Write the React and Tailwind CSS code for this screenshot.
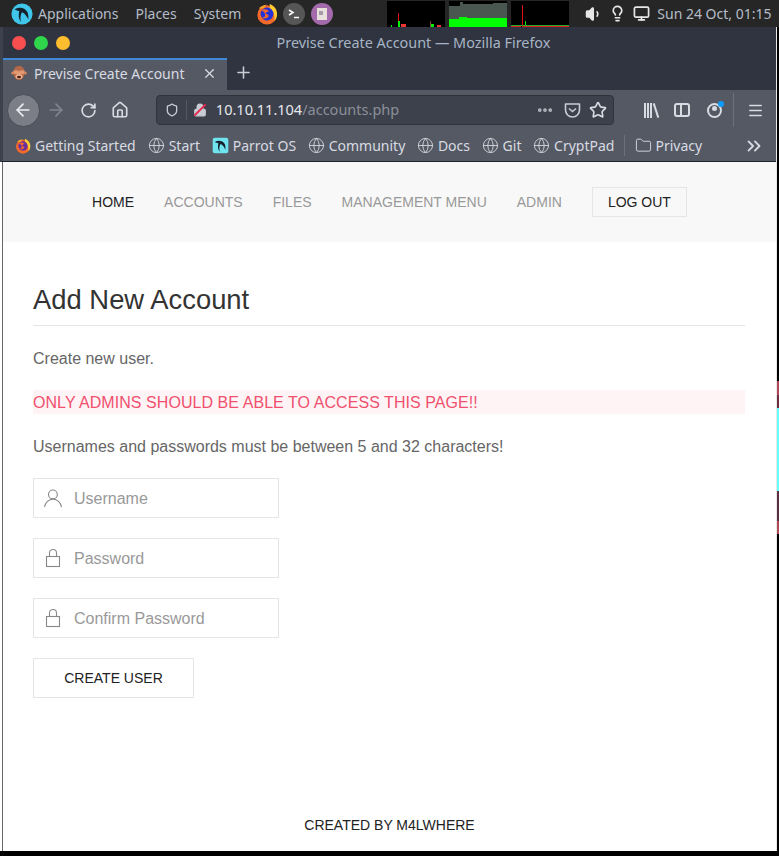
import { ArrowLeft, ArrowRight, RotateCw, House, Shield, Star, X, Plus, Ellipsis, Menu, Volume1, Lightbulb, Monitor, ChevronsRight, Folder, Globe, Lock } from 'lucide-react';

const BOOKMARKS = [
  { label: 'Start', icon: 'globe' },
  { label: 'Parrot OS', icon: 'parrot' },
  { label: 'Community', icon: 'globe' },
  { label: 'Docs', icon: 'globe' },
  { label: 'Git', icon: 'globe' },
  { label: 'CryptPad', icon: 'globe' },
];

const NAV = ['ACCOUNTS', 'FILES', 'MANAGEMENT MENU', 'ADMIN'];

function UserIcon() {
  return (
    <svg width="20" height="20" viewBox="0 0 20 20" fill="none" stroke="#888" strokeWidth="1.1">
      <circle cx="9.9" cy="6.4" r="4.4" />
      <path d="M1.5 19c.8-4.5 4.3-7.8 8.5-7.8s7.7 3.4 8.5 8" />
    </svg>
  );
}

function LockIcon() {
  return (
    <svg width="20" height="20" viewBox="0 0 20 20" fill="none" stroke="#888" strokeWidth="1.1">
      <rect x="3.5" y="8.5" width="13" height="10" />
      <path d="M6.5 8V4.9C6.5 3 8.1 1.5 10 1.5s3.5 1.5 3.5 3.4V8" />
    </svg>
  );
}

const FIELDS = [
  { placeholder: 'Username', Icon: UserIcon },
  { placeholder: 'Password', Icon: LockIcon },
  { placeholder: 'Confirm Password', Icon: LockIcon },
];

function FirefoxLogo({ size = 18, inner = '#2430d8' }) {
  return (
    <svg width={size} height={size} viewBox="0 0 24 24">
      <circle cx="12" cy="13" r="10.5" fill="#f2692a" />
      <path d="M15 1c5 2 8 6 8 11 0 3-1 6-3 8 1-6-1-11-5-14z" fill="#ffcb33" />
      <path d="M3 6c2-2 5-4 9-4-2 1-3 3-3 4z" fill="#f8a02c" />
      <circle cx="12" cy="12" r="7" fill={inner} />
      <path d="M6 8c3-2 7-1 8 1l-4 2 4 3c-1 3-5 4-8 2 3 0 4-1 4-3 0-2-2-4-4-5z" fill="#f2692a" />
    </svg>
  );
}

function ParrotLogo({ size = 22, square = false }) {
  return (
    <svg width={size} height={size} viewBox="0 0 24 24">
      {square ? <rect x="1" y="1" width="22" height="22" rx="3" fill="#6fe3ee" /> : <circle cx="12" cy="12" r="11.5" fill="#3fc6ea" />}
      <path d="M4 7c5-3 11-2 14 3 1 2 1 6 1 8-2-4-4-7-7-8-2 3-2 7-1 11-3-4-3-8-2-12-2-1-3-1-5-2z" fill="#15222e" />
    </svg>
  );
}

// tab favicon, the see-no-evil monkey
function MonkeyIcon() {
  return (
    <svg width="16" height="16" viewBox="0 0 16 16" className="shrink-0">
      <circle cx="1.8" cy="8" r="1.6" fill="#d9875f" />
      <circle cx="14.2" cy="8" r="1.6" fill="#d9875f" />
      <path d="M8 1c3.5 0 5.5 2.5 5.5 6.5S11.5 15 8 15s-5.500-3.500-5.500-7.500S4.500 1 8 1z" fill="#b5694a" />
      <path d="M2.500 5.500h4.800l.7 1.500.7-1.500h4.800v2c0 1-1 1.500-2 1.500H4.500c-1 0-2-.5-2-1.500z" fill="#e39a72" />
      <ellipse cx="8" cy="11.500" rx="3.500" ry="2.500" fill="#eeb48f" />
      <ellipse cx="8" cy="12" rx="2" ry="1.200" fill="#4a2016" />
    </svg>
  );
}

function PocketIcon() {
  return (
    <svg width="17" height="15" viewBox="0 0 17 15" fill="none" stroke="#c8ccd4" strokeWidth="1.6" className="shrink-0">
      <path d="M1.500 1h14v6a7 7 0 0 1-14 0z" strokeLinejoin="round" />
      <path d="M5 5.500l3.500 3 3.500-3" />
    </svg>
  );
}

function TerminalIcon() {
  return (
    <svg width="22" height="22" viewBox="0 0 22 22" fill="none" stroke="#fff" strokeWidth="1.5">
      <circle cx="11" cy="11" r="11" fill="#565656" stroke="none" />
      <path d="M6 7l4 2.500-4 2.500" />
      <path d="M11 14.500h5" />
    </svg>
  );
}

function NotesIcon() {
  return (
    <svg width="22" height="22" viewBox="0 0 22 22">
      <circle cx="11" cy="11" r="11" fill="#a36bab" />
      <path d="M6 5h10v12H6z" fill="#e8e0dc" />
      <path d="M8 8h4v4H8z" fill="#a99aa8" />
    </svg>
  );
}

// system monitor graphs in the panel
function Graph({ kind }) {
  return (
    <svg width="58" height="26" viewBox="0 0 58 26" className="block bg-black">
      {kind === 'a' && (
        <g>
          <rect x="11" y="12" width="1" height="14" fill="#d11" />
          <rect x="11" y="20" width="2" height="6" fill="#0e0" />
          <rect x="14" y="23" width="5" height="3" fill="#e33" />
          <rect x="4" y="24" width="1" height="2" fill="#0e0" />
          <rect x="43" y="20" width="1" height="6" fill="#844" />
          <rect x="44" y="23" width="3" height="3" fill="#0e0" />
          <rect x="50" y="24" width="4" height="2" fill="#e33" />
        </g>
      )}
      {kind === 'b' && (
        <g>
          <path d="M0 5h11V1h3v2h30V2h14v24H0z" fill="#4a5750" />
          <path d="M0 18h10v-2h8v1h40v9H0z" fill="#0f0" />
        </g>
      )}
      {kind === 'c' && (
        <g>
          <rect x="11" y="4" width="1" height="22" fill="#d11" />
          <rect x="14" y="20" width="1" height="6" fill="#0e0" />
          <rect x="0" y="24" width="58" height="1" fill="#2a2" />
          <rect x="12" y="25" width="46" height="1" fill="#d22" />
          <rect x="0" y="25" width="10" height="1" fill="#d22" />
        </g>
      )}
    </svg>
  );
}

function Bookmark({ item }) {
  return (
    <div className="flex items-center gap-[4px]">
      {item.icon === 'globe' ? <Globe size={17} strokeWidth={1.3} className="text-[#d4d6dc]" /> : <ParrotLogo size={17} square />}
      <span>{item.label}</span>
    </div>
  );
}

function TopPanel() {
  return (
    <div className="flex h-[27px] items-center bg-[#262626] pl-[11px] pr-[4px] text-[14px] text-[#b4bcc8]">
      <ParrotLogo />
      <span className="ml-[5px]">Applications</span>
      <span className="ml-[17px]">Places</span>
      <span className="ml-[17px]">System</span>
      <div className="ml-[15px]"><FirefoxLogo size={22} /></div>
      <div className="ml-[5px]"><TerminalIcon /></div>
      <div className="ml-[6px]"><NotesIcon /></div>
      <div className="ml-[54px] flex gap-[4px]">
        <Graph kind="a" />
        <Graph kind="b" />
        <Graph kind="c" />
      </div>
      <Volume1 size={18} className="ml-[16px] text-[#e6e6e6]" fill="#e6e6e6" />
      <Lightbulb size={17} className="ml-[6px] text-[#e6e6e6]" strokeWidth={2.4} />
      <Monitor size={17} className="ml-[7px] text-[#e6e6e6]" strokeWidth={2.4} />
      <span className="ml-[7px] whitespace-nowrap">Sun 24 Oct, 01:15</span>
    </div>
  );
}

function Browser() {
  return (
    <div className="border-b border-l-[3px] border-b-[#1f2229] border-l-[#3d414c] bg-[#2f3440]">
      {/* Titlebar */}
      <div className="relative flex h-[31px] items-center pl-[9px]">
        <div className="flex gap-[8px]">
          <div className="h-[14px] w-[14px] rounded-full bg-[#f9504f]" />
          <div className="h-[14px] w-[14px] rounded-full bg-[#2fd64b]" />
          <div className="h-[14px] w-[14px] rounded-full bg-[#fdbd2e]" />
        </div>
        <span className="absolute inset-x-0 top-[6px] pl-[48px] text-center text-[14.4px] leading-[19px] text-[#a8b4c4]">Previse Create Account — Mozilla Firefox</span>
      </div>
      {/* Tabs */}
      <div className="flex h-[32px] items-stretch">
        <div className="flex w-[224px] items-center border-t-2 border-[#3f88d8] bg-[#555964] pb-[4px] pl-[8px] pr-[10px] text-[14px] text-[#d8dbe2]">
          <MonkeyIcon />
          <span className="ml-[7px] flex-1">Previse Create Account</span>
          <X size={15} className="text-[#d8dbe2]" />
        </div>
        <Plus size={19} className="mb-[4px] ml-[7px] self-center text-[#c8ccd4]" />
      </div>
      {/* Toolbar */}
      <div className="flex h-[38px] items-center bg-[#555964] pl-[4px] pr-[12px] pt-[2px] text-[#d8dbe2]">
        <div className="flex h-[33px] w-[33px] items-center justify-center rounded-full border border-[#4a4d57] bg-[#7b7e86]">
          <ArrowLeft size={20} className="text-[#eceef2]" />
        </div>
        <ArrowRight size={20} className="ml-[6px] text-[#82858e]" />
        <RotateCw size={17} className="ml-[14px]" strokeWidth={2.4} />
        <House size={18} className="ml-[14px]" strokeWidth={2.2} />
        <div className="ml-[27px] flex h-[30px] w-[459px] items-center rounded-[4px] border border-[#30333c] bg-[#3d414c] pl-[8px] pr-[6px]">
          <Shield size={14} className="text-[#c8ccd4]" strokeWidth={2.2} />
          <div className="ml-[7px] h-[20px] w-px bg-[#555964]" />
          <div className="relative ml-[6px] h-[14px] w-[13px]">
            <Lock size={14} className="text-[#c8ccd4]" fill="#c8ccd4" />
            <div className="absolute left-[-1px] top-[6px] h-[2px] w-[16px] -rotate-45 bg-[#e8264a]" />
          </div>
          <span className="ml-[10px] flex-1 text-[14.5px] text-[#e6e8ec]">10.10.11.104<span className="text-[#8b8f99]">/accounts.php</span></span>
          <Ellipsis size={18} className="text-[#b4b8c0]" strokeWidth={3} />
          <div className="ml-[10px]"><PocketIcon /></div>
          <Star size={18} className="ml-[8px] text-[#d8dbe2]" strokeWidth={2.2} />
        </div>
        <div className="ml-[30px] flex items-center">
          <div className="h-[15px] w-[2px] bg-[#d8dbe2]" />
          <div className="ml-[1px] h-[15px] w-[2px] bg-[#d8dbe2]" />
          <div className="ml-[1px] h-[15px] w-[2px] bg-[#d8dbe2]" />
          <div className="ml-[3px] h-[15px] w-[2px] -rotate-[18deg] bg-[#d8dbe2]" />
        </div>
        <div className="ml-[17px] flex h-[14px] w-[16px] rounded-[3px] border-2 border-[#d8dbe2]">
          <div className="w-[6px] border-r-2 border-[#d8dbe2]" />
        </div>
        <div className="relative ml-[17px] h-[15px] w-[15px] rounded-full border-2 border-[#d8dbe2]">
          <div className="mx-auto mt-[1px] h-[5px] w-[5px] rounded-full bg-[#d8dbe2]" />
          <div className="absolute right-[-4px] top-[-4px] h-[6px] w-[6px] rounded-full bg-[#0a9dff]" />
        </div>
        <div className="ml-[11px] h-[34px] w-px bg-[#6c707a]" />
        <Menu size={17} className="ml-[13px]" strokeWidth={2.2} />
      </div>
      {/* Bookmarks */}
      <div className="flex h-[33px] items-center bg-[#555964] pl-[12px] pr-[11px] pt-[2px] text-[14px] text-[#d8dbe2]">
        <div className="flex items-center gap-[4px]">
          <FirefoxLogo size={16} inner="#6a2fa0" />
          <span>Getting Started</span>
        </div>
        <div className="ml-[12px] flex items-center gap-[11.6px]">
          {BOOKMARKS.map(item => <Bookmark key={item.label} item={item} />)}
        </div>
        <div className="ml-[10px] h-[21px] w-px bg-[#6c707a]" />
        <Folder size={17} strokeWidth={1.3} className="ml-[10px]" />
        <span className="ml-[3px]">Privacy</span>
        <ChevronsRight size={22} strokeWidth={2} className="ml-auto" />
      </div>
    </div>
  );
}

function Page() {
  return (
    <div className="flex h-[689px] flex-col bg-white font-['Liberation_Sans',sans-serif]">
      <nav className="flex h-[80px] items-center justify-center gap-[30px] bg-[#f8f8f8] text-[14px] text-[#999]">
        <span className="text-[#222]">HOME</span>
        {NAV.map(item => <span key={item}>{item}</span>)}
        <span className="flex h-[30px] items-center border border-[#e5e5e5] px-[15px] text-[#222]">LOG OUT</span>
      </nav>
      <main className="flex-1 pl-[30px] pr-[31px] pt-[40px] text-[16px] text-[#666]">
        <h1 className="border-b border-[#e5e5e5] pb-[7px] text-[27.4px] leading-[36px] text-[#333]">Add New Account</h1>
        <p className="mt-[20px] h-[24px] leading-[26px]">Create new user.</p>
        <p className="mt-[20px] h-[24px] bg-[#fef4f6] leading-[26px] tracking-[0.06px] text-[#f0506e]">ONLY ADMINS SHOULD BE ABLE TO ACCESS THIS PAGE!!</p>
        <p className="mt-[20px] h-[24px] leading-[26px]">Usernames and passwords must be between 5 and 32 characters!</p>
        <form className="mt-[20px] flex flex-col items-start gap-[20px]">
          {FIELDS.map(({ placeholder, Icon }) => (
            <div key={placeholder} className="flex h-[40px] w-[246px] items-center border border-[#e5e5e5] pl-[9px] text-[#999]">
              <Icon />
              <span className="ml-[11px] pt-[2px]">{placeholder}</span>
            </div>
          ))}
          <button type="button" className="h-[40px] w-[161px] border border-[#e5e5e5] text-[14px] text-[#222]">CREATE USER</button>
        </form>
      </main>
      <footer className="pb-[16px] text-center text-[14px] leading-[20px] text-[#222]">CREATED BY M4LWHERE</footer>
    </div>
  );
}

export default function App() {
  return (
    <div className="h-[856px] w-[779px] overflow-hidden bg-black font-['Noto_Sans',sans-serif]">
      <TopPanel />
      <div className="flex">
        <div className="w-[776px] shrink-0">
          <Browser />
          <div className="bg-white pl-[2px]">
            <div className="border-l border-[#666]">
              <Page />
            </div>
          </div>
        </div>
        <div className="w-px self-stretch bg-[#e8e8e8]" />
        {/* bit of the desktop showing past the window edge */}
        <div className="flex w-[2px] flex-col">
          <div className="h-[354px]" />
          <div className="h-[14px] bg-[#b04858]" />
          <div className="h-[13px] bg-[#6a3040]" />
          <div className="h-[83px] bg-[#66ffff]" />
          <div className="h-[30px] bg-[#5a3040]" />
          <div className="h-[13px] bg-[#b04858]" />
        </div>
      </div>
    </div>
  );
}
